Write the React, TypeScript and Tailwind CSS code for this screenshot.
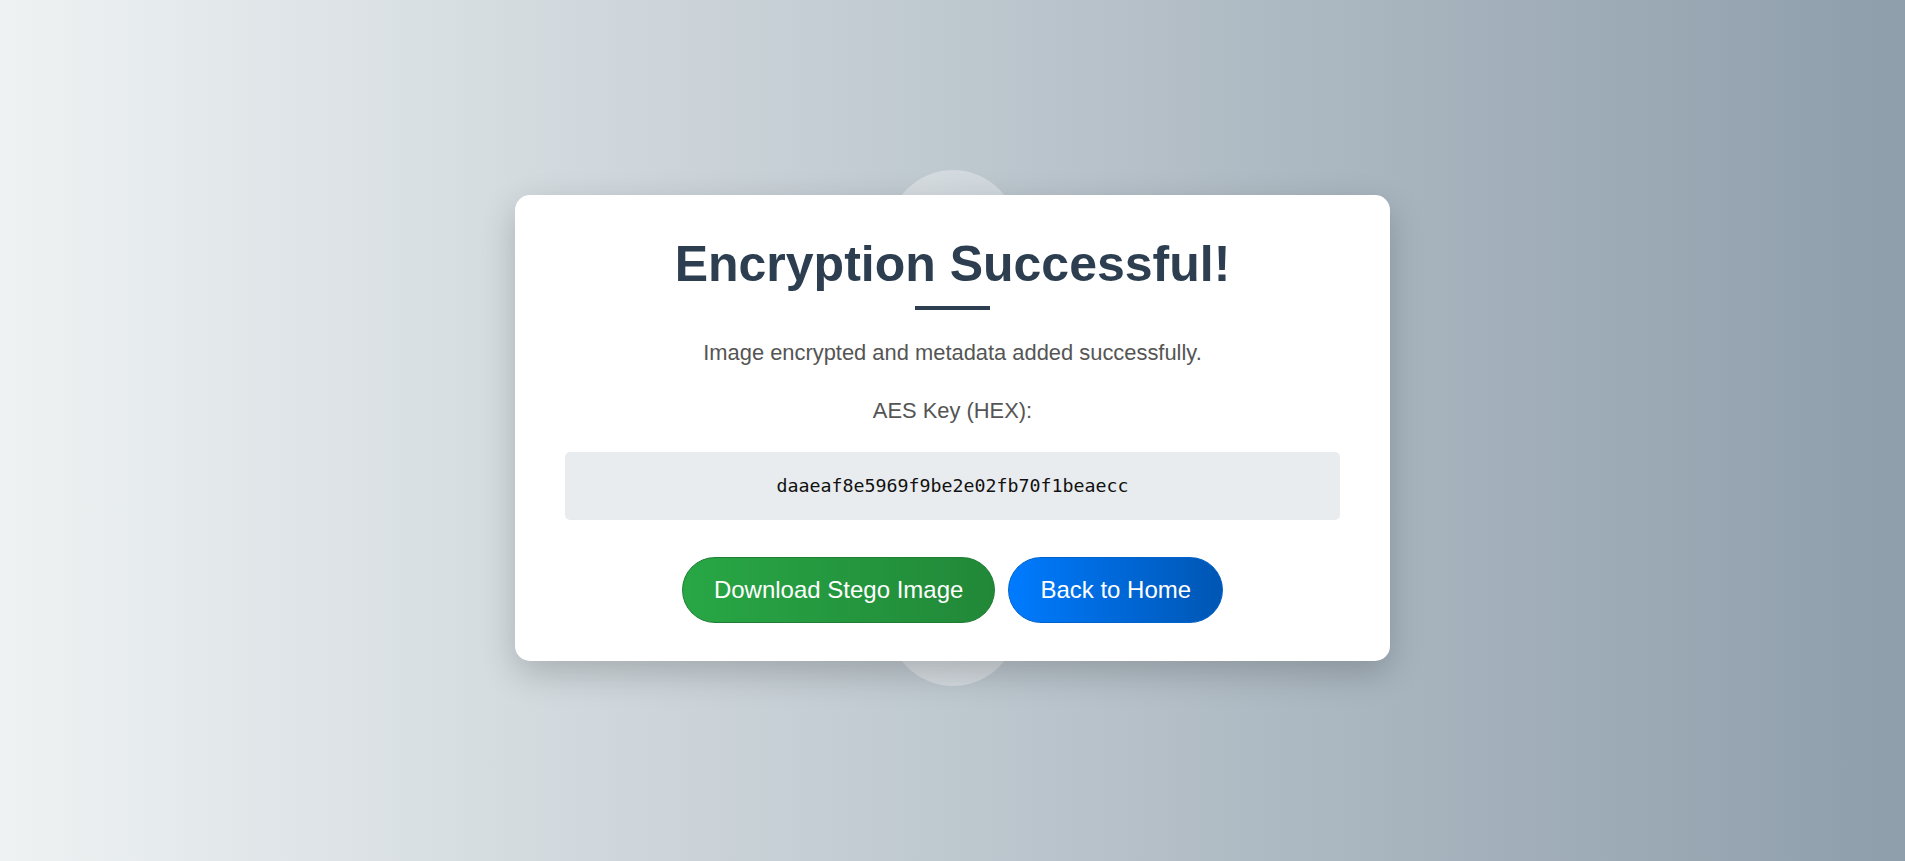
export default function App() {
  return (
    <div className="min-h-screen w-full flex items-center justify-center pb-[5px] bg-[linear-gradient(to_right,#eef2f3,#8e9eab)] font-['Liberation_Sans',Arial,sans-serif]">
      <div className="relative">
        <div className="absolute left-1/2 -translate-x-1/2 -top-[25px] w-[130px] h-[130px] rounded-full bg-[rgba(255,255,255,0.33)]" />
        <div className="absolute left-1/2 -translate-x-1/2 -bottom-[25px] w-[130px] h-[130px] rounded-full bg-[rgba(255,255,255,0.33)]" />
        <div className="relative z-10 w-[875px] bg-white rounded-[15px] pt-[41px] pb-[38px] px-[50px] text-center shadow-[0_12px_35px_rgba(0,0,0,0.2)]">
          <h1 className="text-[50px] leading-[57px] font-bold text-[#2c3e50]">Encryption Successful!</h1>
          <div className="mx-auto mt-[13px] h-[4px] w-[75px] bg-[#2c3e50]" />
          <p className="mt-[30px] text-[21.9px] leading-[25px] text-[#555]">Image encrypted and metadata added successfully.</p>
          <p className="mt-[33px] text-[21.9px] leading-[25px] text-[#555]">AES Key (HEX):</p>
          <div className="mt-[29px] h-[68px] rounded-[5px] bg-[#e9ecef] flex items-center justify-center font-['DejaVu_Sans_Mono',monospace] text-[18.3px] text-[#111]">
            daaeaf8e5969f9be2e02fb70f1beaecc
          </div>
          <div className="mt-[37px] flex items-center justify-center gap-[13px]">
            <button className="h-[66px] px-[31px] rounded-full border border-[#1e7e34] bg-[linear-gradient(to_right,#28a745,#218838)] text-white text-[24px]">
              Download Stego Image
            </button>
            <button className="h-[66px] px-[31px] rounded-full border border-[#0062cc] bg-[linear-gradient(to_right,#007bff,#0056b3)] text-white text-[24px]">
              Back to Home
            </button>
          </div>
        </div>
      </div>
    </div>
  );
}
